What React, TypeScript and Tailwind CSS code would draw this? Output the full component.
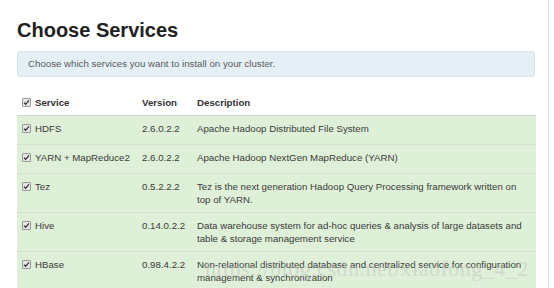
import React from 'react';

const services = [
  { name: 'HDFS', version: '2.6.0.2.2', desc: 'Apache Hadoop Distributed File System' },
  { name: 'YARN + MapReduce2', version: '2.6.0.2.2', desc: 'Apache Hadoop NextGen MapReduce (YARN)' },
  {
    name: 'Tez',
    version: '0.5.2.2.2',
    desc: 'Tez is the next generation Hadoop Query Processing framework written on top of YARN.',
  },
  {
    name: 'Hive',
    version: '0.14.0.2.2',
    desc: 'Data warehouse system for ad-hoc queries & analysis of large datasets and table & storage management service',
  },
  {
    name: 'HBase',
    version: '0.98.4.2.2',
    desc: 'Non-relational distributed database and centralized service for configuration management & synchronization',
  },
];

const Checkbox = () => (
  <span className="flex items-center justify-center w-[9px] h-[9px] shrink-0 rounded-[1px] border border-[#9a9a9a] bg-[#e6e6e6]">
    <svg viewBox="0 0 8 8" className="w-[7px] h-[7px]">
      <path d="M1.2 4.2 L3.1 6.1 L6.8 1.6" fill="none" stroke="#333" strokeWidth="1.5" />
    </svg>
  </span>
);

export default function App() {
  return (
    <div
      className="relative h-screen w-[549px] overflow-hidden border-r border-[#dedede] bg-white text-[#3a3a3a]"
      style={{ fontFamily: '"Liberation Sans", Arial, sans-serif' }}
    >
      <h1 className="pt-[18px] pl-[17px] text-[20px] leading-[24px] font-bold text-[#222]">Choose Services</h1>

      {/* Info alert */}
      <div className="mt-[9px] ml-[17px] w-[518px] h-[26px] flex items-center pl-[10px] rounded-[3px] border border-[#d5e4ec] bg-[#e5f0f6] text-[9.7px] text-[#5a5a5a]">
        Choose which services you want to install on your cluster.
      </div>

      {/* Services table */}
      <table className="mt-[13px] ml-[17px] w-[519px] table-fixed border-separate border-spacing-0 text-[9.7px] leading-[13px]">
        <colgroup>
          <col className="w-[120px]" />
          <col className="w-[55px]" />
          <col />
        </colgroup>
        <thead>
          <tr className="h-[25px]">
            <th className="py-[6px] pl-[5px] text-left align-top font-bold text-[#333]">
              <div className="flex items-center gap-[4px] h-[13px]">
                <Checkbox />
                Service
              </div>
            </th>
            <th className="py-[6px] pl-[5px] text-left align-top font-bold text-[#333]">Version</th>
            <th className="py-[6px] pl-[5px] text-left align-top font-bold text-[#333]">Description</th>
          </tr>
        </thead>
        <tbody>
          {services.map((s, i) => (
            <tr key={s.name} className="h-[29px] bg-[#dff0d8]">
              <td className={`py-[6px] pl-[5px] align-top border-t ${i === 0 ? 'border-[#d4d4d4]' : 'border-[#d9dfd5]'}`}>
                <div className="flex items-center gap-[4px] h-[13px]">
                  <Checkbox />
                  {s.name}
                </div>
              </td>
              <td className={`py-[6px] pl-[5px] align-top border-t ${i === 0 ? 'border-[#d4d4d4]' : 'border-[#d9dfd5]'}`}>
                {s.version}
              </td>
              <td className={`py-[6px] pl-[5px] pr-[6px] align-top border-t ${i === 0 ? 'border-[#d4d4d4]' : 'border-[#d9dfd5]'}`}>
                {s.desc}
              </td>
            </tr>
          ))}
        </tbody>
      </table>

      {/* watermark */}
      <div
        className="pointer-events-none absolute left-[205px] top-[252px] text-[22px] tracking-[0.5px] text-[#c4c4c4] opacity-50 whitespace-nowrap"
        style={{ fontFamily: '"Liberation Serif", "Times New Roman", serif' }}
      >
        https://blog.csdn.net/xiaofong_4_2
      </div>
    </div>
  );
}
